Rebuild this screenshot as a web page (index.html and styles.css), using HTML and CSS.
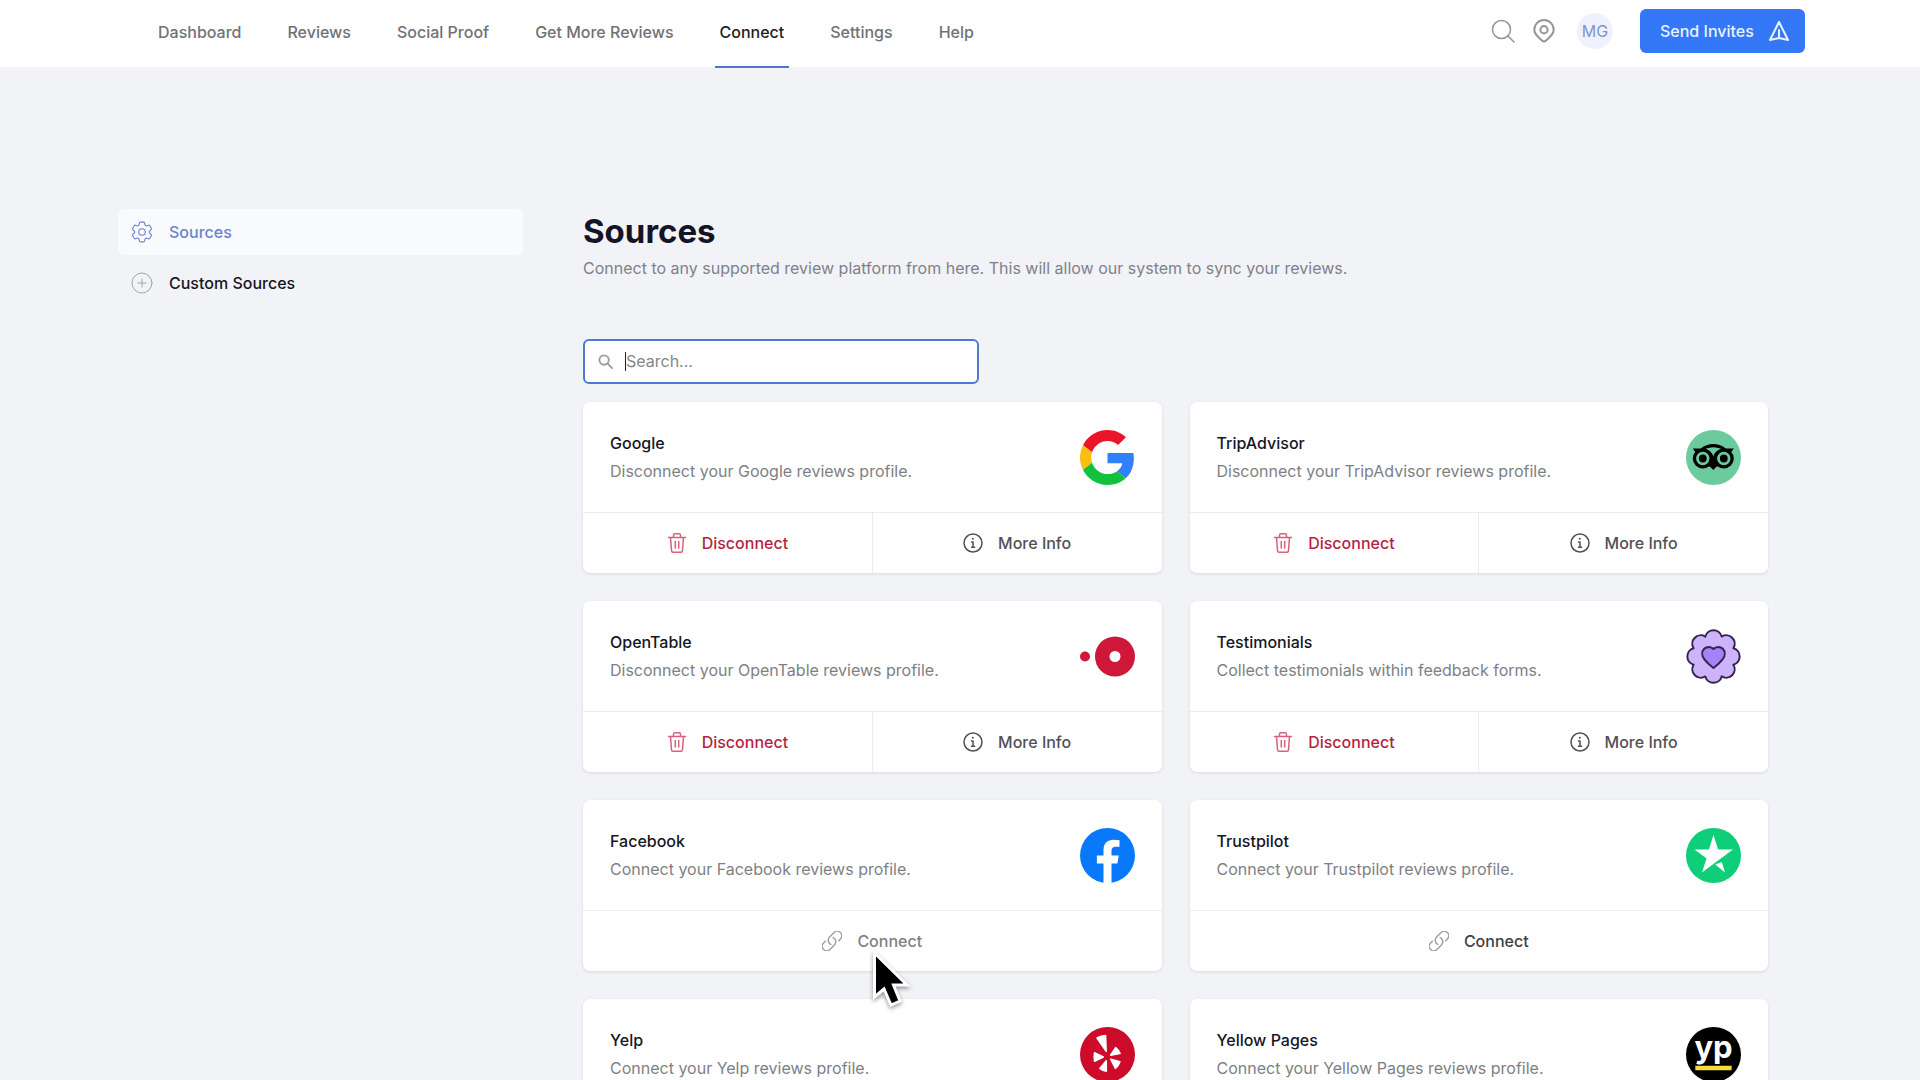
FILE: index.html
```html
<!DOCTYPE html>
<html lang="en">
  <head>
    <meta charset="utf-8">
    <title>Sources</title>
    <link rel="stylesheet" href="styles.css">
  </head>
  <body>
    <!-- shared icons -->
    <svg class="sprite" aria-hidden="true">
      <symbol id="trash" viewBox="0 0 20 20">
        <path d="M1.5 4.5h17M3.5 4.5l1 13.2a1.6 1.6 0 0 0 1.6 1.5h7.8a1.6 1.6 0 0 0 1.6-1.500l1-13.200M6.500 4.500V2.200A1.400 1.400 0 0 1 7.900.8h4.200a1.400 1.400 0 0 1 1.400 1.400v2.300M8.300 8.500v6.500M11.700 8.500v6.500"/>
      </symbol>
      <symbol id="info" viewBox="0 0 20 20">
        <circle cx="10" cy="10" r="9"/>
        <path d="M8.5 9h1.500v5M8.500 14.200h3.200"/>
        <circle class="dot" cx="9.8" cy="5.8" r="1"/>
      </symbol>
      <symbol id="link" viewBox="2 2 20 20">
        <path d="M13.19 8.688a4.5 4.5 0 0 1 1.242 7.244l-4.5 4.5a4.5 4.5 0 0 1-6.364-6.364l1.757-1.757m13.35-.622l1.757-1.757a4.5 4.5 0 0 0-6.364-6.364l-4.5 4.5a4.5 4.5 0 0 0 1.242 7.244"/>
      </symbol>
    </svg>

    <header class="header">
      <nav class="nav">
        <a href="#">Dashboard</a>
        <a href="#">Reviews</a>
        <a href="#">Social Proof</a>
        <a href="#">Get More Reviews</a>
        <a href="#" class="active">Connect</a>
        <a href="#">Settings</a>
        <a href="#">Help</a>
      </nav>
      <div class="tools">
        <button class="tool" aria-label="Search">
          <svg class="icon" viewBox="0 0 24 24"><circle cx="10.5" cy="10.5" r="9"/><path d="M17 17l6 6"/></svg>
        </button>
        <button class="tool" aria-label="Locations">
          <svg class="icon icon-pin" viewBox="0 0 24 24"><path d="M12 22.5c-1 0-1.6-.6-2.3-1.3C5.5 17.5 2.3 14.8 2.3 10.7a9.7 9.7 0 0 1 19.4 0c0 4.1-3.2 6.8-7.4 10.5-.7.7-1.3 1.3-2.3 1.3z"/><circle cx="12" cy="10.7" r="3.6"/></svg>
        </button>
        <button class="avatar">MG</button>
        <button class="send">
          Send Invites
          <svg class="icon" viewBox="2 2 20 20"><path d="M12 19l9 2-9-18-9 18 9-2zm0 0v-8"/></svg>
        </button>
      </div>
    </header>

    <div class="page">
      <nav class="sidebar">
        <a href="#" class="active">
          <svg class="icon" viewBox="2 2 20 20"><path d="M9.594 3.94c.09-.542.56-.94 1.11-.94h2.593c.55 0 1.02.398 1.11.94l.213 1.281c.063.374.313.686.645.87.074.04.147.083.22.127.324.196.72.257 1.075.124l1.217-.456a1.125 1.125 0 0 1 1.37.49l1.296 2.247a1.125 1.125 0 0 1-.26 1.431l-1.003.827c-.293.24-.438.613-.431.992a6.759 6.759 0 0 1 0 .255c-.007.378.138.75.43.99l1.005.828c.424.35.534.954.26 1.43l-1.298 2.247a1.125 1.125 0 0 1-1.369.491l-1.217-.456c-.355-.133-.75-.072-1.076.124a6.57 6.57 0 0 1-.22.128c-.331.183-.581.495-.644.869l-.213 1.28c-.09.543-.56.941-1.11.941h-2.594c-.55 0-1.02-.398-1.11-.94l-.213-1.281c-.062-.374-.312-.686-.644-.87a6.52 6.52 0 0 1-.22-.127c-.325-.196-.72-.257-1.076-.124l-1.217.456a1.125 1.125 0 0 1-1.369-.49l-1.297-2.247a1.125 1.125 0 0 1 .26-1.431l1.004-.827c.292-.24.437-.613.43-.992a6.932 6.932 0 0 1 0-.255c.007-.378-.138-.75-.43-.99l-1.004-.828a1.125 1.125 0 0 1-.26-1.43l1.297-2.247a1.125 1.125 0 0 1 1.37-.491l1.216.456c.356.133.751.072 1.076-.124.072-.044.146-.087.22-.128.332-.183.582-.495.644-.869l.214-1.281z"/><circle cx="12" cy="12" r="3"/></svg>
          Sources
        </a>
        <a href="#">
          <svg class="icon icon-plus" viewBox="0 0 22 22"><circle cx="11" cy="11" r="10"/><path d="M11 7v8M7 11h8"/></svg>
          Custom Sources
        </a>
      </nav>

      <main>
        <h1>Sources</h1>
        <p class="intro">Connect to any supported review platform from here. This will allow our system to sync your reviews.</p>

        <div class="search">
          <svg class="icon" viewBox="0 0 16 16"><circle cx="6.5" cy="6.5" r="5"/><path d="M10.3 10.3L15 15"/></svg>
          <span class="caret"></span>
          <input type="text" placeholder="Search..." aria-label="Search sources">
        </div>

        <div class="cards">
          <section class="card">
            <div class="info">
              <div>
                <h2>Google</h2>
                <p>Disconnect your Google reviews profile.</p>
              </div>
              <svg class="logo" viewBox="0 0 48 48">
                <path fill="#ea1528" d="M24 9.5c3.54 0 6.71 1.22 9.21 3.6l6.85-6.85C35.9 2.38 30.47 0 24 0 14.62 0 6.51 5.38 2.56 13.22l7.98 6.19C12.43 13.72 17.74 9.5 24 9.5z"/>
                <path fill="#3180fb" d="M46.98 24.55c0-1.57-.15-3.09-.38-4.55H24v9.02h12.94c-.58 2.96-2.26 5.48-4.78 7.18l7.73 6c4.51-4.18 7.09-10.36 7.09-17.65z"/>
                <path fill="#fabd12" d="M10.53 28.59c-.48-1.45-.76-2.99-.76-4.59s.27-3.14.76-4.59l-7.98-6.19C.92 16.46 0 20.12 0 24s.92 7.54 2.56 10.78l7.97-6.19z"/>
                <path fill="#12c23e" d="M24 48c6.48 0 11.93-2.13 15.89-5.81l-7.73-6c-2.15 1.45-4.92 2.3-8.16 2.3-6.26 0-11.57-4.22-13.47-9.91l-7.98 6.19C6.51 42.62 14.62 48 24 48z"/>
              </svg>
            </div>
            <div class="actions">
              <button class="danger"><svg class="icon"><use href="#trash"/></svg>Disconnect</button>
              <button><svg class="icon"><use href="#info"/></svg>More Info</button>
            </div>
          </section>

          <section class="card">
            <div class="info">
              <div>
                <h2>TripAdvisor</h2>
                <p>Disconnect your TripAdvisor reviews profile.</p>
              </div>
              <svg class="logo" viewBox="0 0 55 55">
                <circle cx="27.5" cy="27.5" r="27.5" fill="#6bcb9f"/>
                <path d="M6.8 18.5h8Q20 14 27.300 14t12.500 4.500h8L44.500 23l-8 13.500h-5.800L27.300 40l-3.400-3.500H18L10 23z"/>
                <circle cx="16.800" cy="28.500" r="10"/>
                <circle cx="37.800" cy="28.500" r="10"/>
                <path fill="#6bcb9f" d="M19.500 18.700q7.800-3 15.600 0-6.300 2-7.800 7.800-1.500-5.800-7.800-7.800z"/>
                <g fill="none" stroke="#6bcb9f" stroke-width="2.800">
                  <circle cx="16.800" cy="28.500" r="5.300"/>
                  <circle cx="37.800" cy="28.500" r="5.300"/>
                </g>
              </svg>
            </div>
            <div class="actions">
              <button class="danger"><svg class="icon"><use href="#trash"/></svg>Disconnect</button>
              <button><svg class="icon"><use href="#info"/></svg>More Info</button>
            </div>
          </section>

          <section class="card">
            <div class="info">
              <div>
                <h2>OpenTable</h2>
                <p>Disconnect your OpenTable reviews profile.</p>
              </div>
              <svg class="logo" viewBox="0 0 55 55">
                <g fill="#cf1739">
                  <circle cx="5" cy="27.5" r="5"/>
                  <circle cx="35" cy="27.5" r="20"/>
                </g>
                <circle cx="35" cy="27.5" r="5.5" fill="#fff"/>
              </svg>
            </div>
            <div class="actions">
              <button class="danger"><svg class="icon"><use href="#trash"/></svg>Disconnect</button>
              <button><svg class="icon"><use href="#info"/></svg>More Info</button>
            </div>
          </section>

          <section class="card">
            <div class="info">
              <div>
                <h2>Testimonials</h2>
                <p>Collect testimonials within feedback forms.</p>
              </div>
              <svg class="logo" viewBox="0 0 55 55" stroke="#35224f" stroke-width="2" stroke-linejoin="round">
                <path fill="#cdb4fa" d="M47.4 19.3a8.500 8.500 0 0 1 0 16.400 8.500 8.500 0 0 1-11.700 11.700 8.500 8.500 0 0 1-16.400 0 8.500 8.500 0 0 1-11.700-11.700 8.500 8.500 0 0 1 0-16.400 8.500 8.500 0 0 1 11.700-11.700 8.500 8.500 0 0 1 16.400 0 8.500 8.500 0 0 1 11.700 11.700z"/>
                <path fill="#a682f8" d="M27.5 20c2.300-2.800 6.900-2.700 9.300-.2 2.700 2.800 2.500 7.200-.2 10.600-2.300 3-5.400 5.900-9.100 8.600-3.700-2.700-6.800-5.600-9.100-8.600-2.700-3.400-2.900-7.800-.2-10.600 2.400-2.500 7-2.600 9.300.2z"/>
              </svg>
            </div>
            <div class="actions">
              <button class="danger"><svg class="icon"><use href="#trash"/></svg>Disconnect</button>
              <button><svg class="icon"><use href="#info"/></svg>More Info</button>
            </div>
          </section>

          <section class="card">
            <div class="info">
              <div>
                <h2>Facebook</h2>
                <p>Connect your Facebook reviews profile.</p>
              </div>
              <svg class="logo" viewBox="0 0 55 55">
                <circle cx="27.5" cy="27.5" r="27.5" fill="#0a78fb"/>
                <path fill="#fff" d="M23.5 55V35.5h-6.600v-8h6.600v-5.300c0-7 4.100-10.400 10.200-10.400 2.200 0 4.200.2 5.800.5v6.500h-3.600c-3.400 0-4.400 1.600-4.400 4.300v4.400h7.200l-1.300 8h-5.900V55z"/>
              </svg>
            </div>
            <div class="actions">
              <button class="hover"><svg class="icon"><use href="#link"/></svg>Connect</button>
            </div>
            <svg class="pointer" viewBox="0 0 40 60" aria-hidden="true">
              <path d="M2.5 3v44l9.500-8 7 16 9-4-6.500-16H35z"/>
            </svg>
          </section>

          <section class="card">
            <div class="info">
              <div>
                <h2>Trustpilot</h2>
                <p>Connect your Trustpilot reviews profile.</p>
              </div>
              <svg class="logo" viewBox="0 0 55 55">
                <circle cx="27.5" cy="27.5" r="27.5" fill="#0fce7a"/>
                <path fill="#fff" d="M27.5 7l4.600 14.500h14.800L16 44.500l4.600-14-12-9h14.300zM29.300 36.500l6.500-2.500L39 44.500z"/>
              </svg>
            </div>
            <div class="actions">
              <button class="dark"><svg class="icon"><use href="#link"/></svg>Connect</button>
            </div>
          </section>

          <section class="card">
            <div class="info">
              <div>
                <h2>Yelp</h2>
                <p>Connect your Yelp reviews profile.</p>
              </div>
              <svg class="logo" viewBox="0 0 55 55">
                <circle cx="27.5" cy="27.5" r="27.5" fill="#cd0b2a"/>
                <path fill="#fff" stroke="#fff" stroke-width="1.500" stroke-linejoin="round" d="M17 11q4-2.300 8.600-2.400l.6 15.800zM30.600 28.200l5-7.600q3.300 2.500 4.500 6zM30.700 32.200l9.200 2.600q-1.300 4-4.500 6.600zM26.300 33.800v10.400q-3.600-.4-6.500-2.700zM23.300 30l-8.800 4.200q-.8-4.200 0-8.400z"/>
              </svg>
            </div>
          </section>

          <section class="card">
            <div class="info">
              <div>
                <h2>Yellow Pages</h2>
                <p>Connect your Yellow Pages reviews profile.</p>
              </div>
              <svg class="logo" viewBox="0 0 55 55">
                <circle cx="27.5" cy="27.5" r="27.5"/>
                <text class="yp" x="27.5" y="31" text-anchor="middle">yp</text>
                <path fill="#f3dd38" d="M9.3 38.7h36.300v4.600H9.300z"/>
              </svg>
            </div>
          </section>
        </div>
      </main>
    </div>
  </body>
</html>
```

FILE: styles.css
```css
* {
  box-sizing: border-box;
  margin: 0;
  padding: 0;
}

html {
  scrollbar-width: none;
}

body {
  font-family: Inter, sans-serif;
  font-size: 16px;
  line-height: 28px;
  color: #16161f;
  background: #f2f3f7;
}

a {
  color: inherit;
  text-decoration: none;
}

button {
  font: inherit;
  color: inherit;
  background: none;
  border: 0;
  cursor: pointer;
}

.sprite {
  display: none;
}

.icon {
  width: 20px;
  height: 20px;
  flex: none;
  fill: none;
  stroke: currentColor;
  stroke-width: 1.5;
  stroke-linecap: round;
  stroke-linejoin: round;
}

.dot {
  fill: currentColor;
  stroke: none;
}

/* header */

.header {
  display: flex;
  align-items: center;
  justify-content: space-between;
  height: 67px;
  padding: 0 115px 5px 153px;
  background: #fff;
}

.nav {
  display: flex;
  gap: 36px;
  font-weight: 500;
  color: #707176;
}

.nav a {
  position: relative;
  padding: 2px 5px 0;
}

.nav .active {
  color: #202126;
}

.nav .active::after {
  content: "";
  position: absolute;
  left: 0;
  right: 0;
  bottom: -22px;
  height: 2px;
  background: #4f76d2;
}

.tools {
  display: flex;
  align-items: center;
}

.tool {
  display: flex;
  margin-right: 17px;
  color: #96969a;
}

.tool .icon {
  width: 24px;
  height: 24px;
}

.tool .icon-pin {
  stroke-width: 2;
}

.avatar {
  width: 36px;
  height: 36px;
  margin: 0 27px 0 4px;
  border-radius: 50%;
  background: #eef1fe;
  color: #8494cf;
}

.send {
  display: flex;
  align-items: center;
  justify-content: space-between;
  width: 165px;
  height: 44px;
  padding: 0 16px 0 20px;
  border-radius: 6px;
  background: #3478f8;
  color: #e9f3ff;
  font-weight: 500;
}

.send .icon {
  stroke-width: 2;
}

/* page */

.page {
  display: grid;
  grid-template-columns: 405px 1fr;
  gap: 60px;
  padding: 142px 152px 28px 118px;
}

.sidebar {
  display: flex;
  flex-direction: column;
  gap: 5px;
  font-weight: 500;
}

.sidebar a {
  display: flex;
  align-items: center;
  gap: 16px;
  height: 46px;
  padding: 0 13px;
  border-radius: 6px;
}

.sidebar .icon {
  width: 22px;
  height: 22px;
  stroke-width: 1;
}

.sidebar .icon-plus {
  color: #a3a4a9;
}

.sidebar .active {
  background: #f8fafe;
  color: #6a84cd;
}

h1 {
  font-size: 33px;
  line-height: 44px;
  font-weight: 700;
  color: #141426;
}

.intro {
  margin: 1px 0 57px;
  color: #808188;
}

.search {
  position: relative;
  width: 396px;
  margin-bottom: 18px;
}

.search input {
  display: block;
  width: 100%;
  height: 45px;
  padding: 0 14px 1px 41px;
  border: 2px solid #5079d3;
  border-radius: 6px;
  outline: 0;
  background: #fff;
  font: inherit;
}

.search input::placeholder {
  color: #858589;
}

.search .icon {
  position: absolute;
  left: 15px;
  top: 15px;
  width: 15px;
  height: 15px;
  color: #9d9da2;
  stroke-width: 2;
}

.caret {
  position: absolute;
  left: 42px;
  top: 13px;
  width: 1px;
  height: 19px;
  background: #222;
}

/* source cards */

.cards {
  display: grid;
  grid-template-columns: 1fr 1fr;
  gap: 28px;
}

.card {
  position: relative;
  border-radius: 7px;
  background: #fff;
  box-shadow: 0 1px 3px rgba(30, 30, 60, 0.12);
}

.info {
  display: flex;
  align-items: center;
  justify-content: space-between;
  padding: 27px;
}

.info h2 {
  font-size: 16px;
  line-height: 28px;
  font-weight: 500;
}

.info p {
  color: #7e7f85;
}

.logo {
  width: 55px;
  height: 55px;
  flex: none;
}

.yp {
  font: 700 31px Inter, sans-serif;
  fill: #fff;
}

.actions {
  display: flex;
  border-top: 1px solid #ececef;
}

.actions button {
  display: flex;
  flex: 1;
  align-items: center;
  justify-content: center;
  gap: 15px;
  height: 60px;
  color: #505157;
  font-weight: 500;
}

.actions button + button {
  border-left: 1px solid #ececef;
}

.actions .danger {
  color: #b51f43;
}

.danger .icon {
  color: #d9607c;
}

.actions .hover {
  color: #808086;
}

.actions .dark {
  color: #3f4046;
}

.hover .icon,
.dark .icon {
  color: #a0a0a4;
}

.pointer {
  position: absolute;
  left: 50%;
  top: 150px;
  z-index: 1;
  width: 40px;
  height: 60px;
  fill: #000;
  stroke: #fff;
  stroke-width: 3;
  filter: drop-shadow(0 2px 2px rgba(0, 0, 0, 0.4));
}
```
